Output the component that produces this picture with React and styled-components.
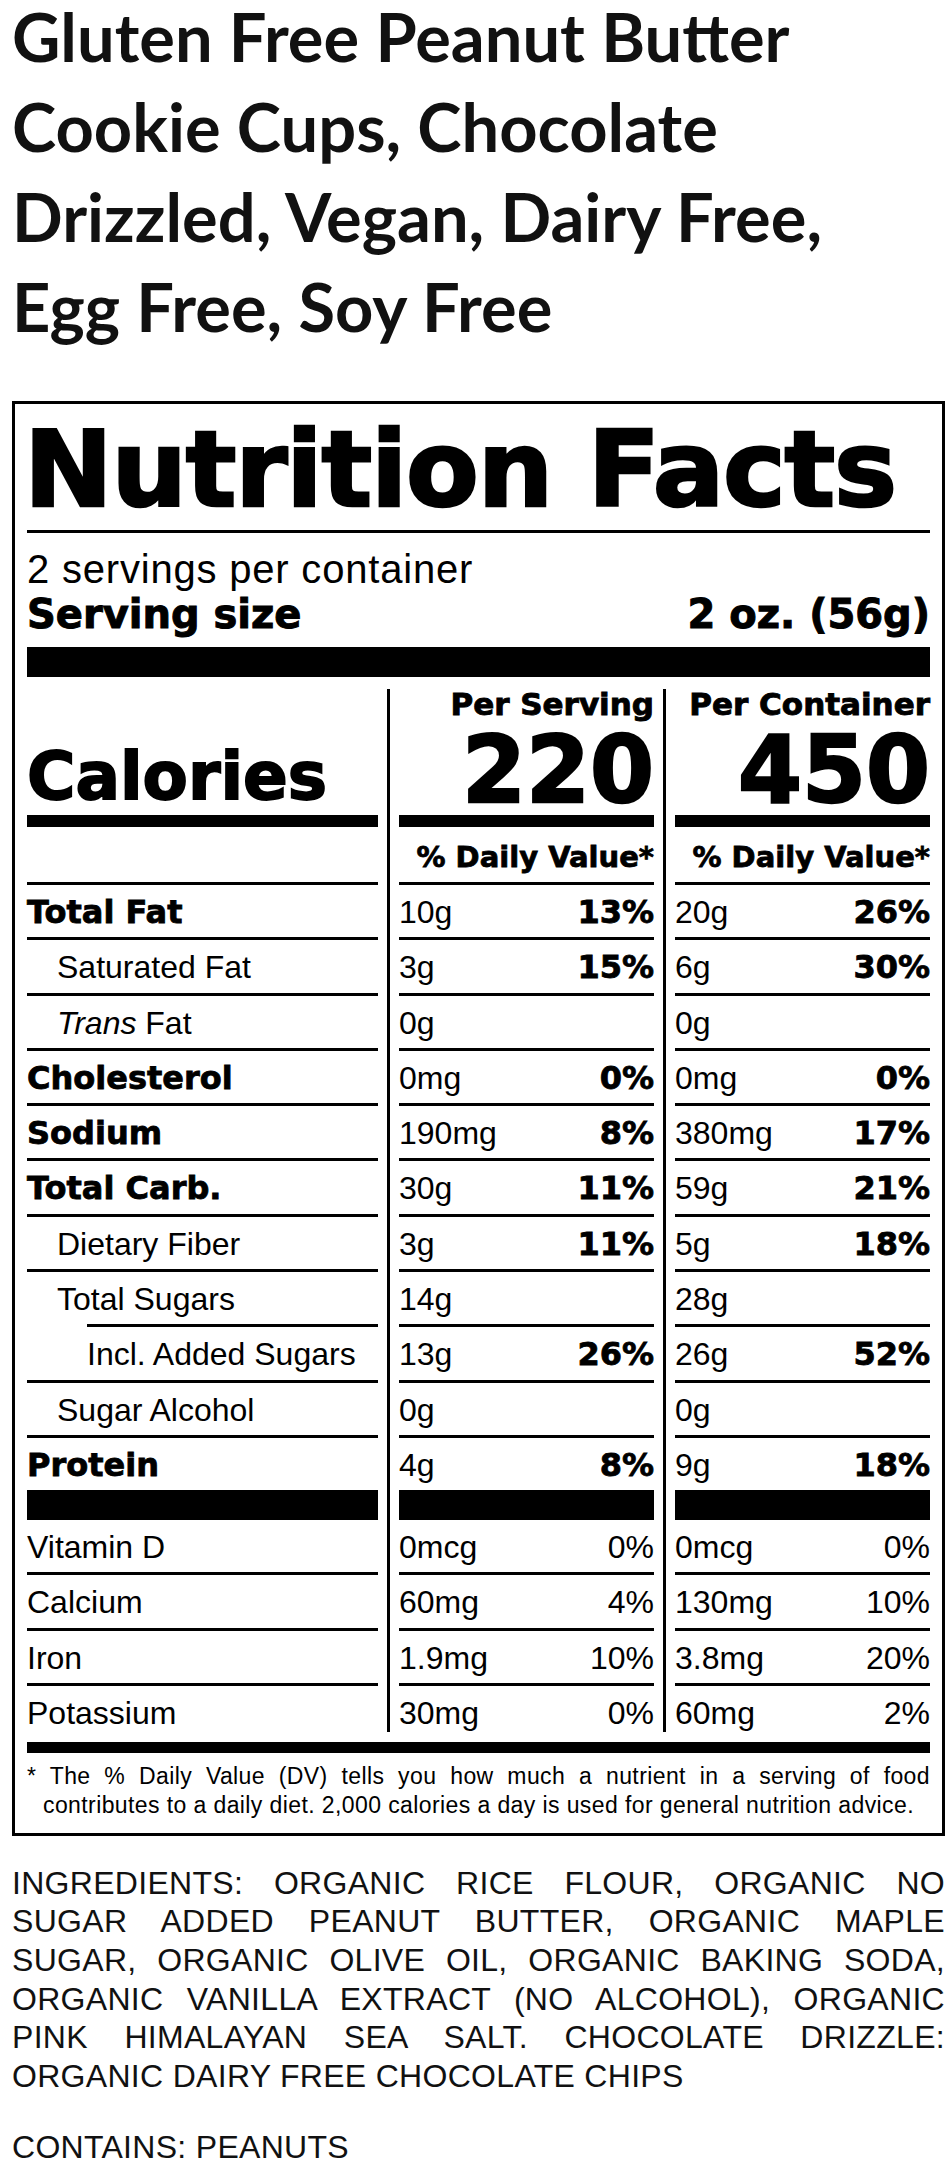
import styled, { createGlobalStyle } from "styled-components";

const GlobalStyle = createGlobalStyle`
  html, body {
    margin: 0;
    padding: 0;
    background: #fff;
    color: #000;
  }
  body {
    font-family: "Liberation Sans", Arial, sans-serif;
  }
`;

const HEAVY = `"DejaVu Sans", "Liberation Sans", sans-serif`;

const rows = [
  { label: "Total Fat", bold: true, a: ["10g", "13%"], b: ["20g", "26%"] },
  { label: "Saturated Fat", indent: 1, a: ["3g", "15%"], b: ["6g", "30%"] },
  { label: "Trans", trans: true, indent: 1, a: ["0g", ""], b: ["0g", ""] },
  { label: "Cholesterol", bold: true, a: ["0mg", "0%"], b: ["0mg", "0%"] },
  { label: "Sodium", bold: true, a: ["190mg", "8%"], b: ["380mg", "17%"] },
  { label: "Total Carb.", bold: true, a: ["30g", "11%"], b: ["59g", "21%"] },
  { label: "Dietary Fiber", indent: 1, a: ["3g", "11%"], b: ["5g", "18%"] },
  { label: "Total Sugars", indent: 1, a: ["14g", ""], b: ["28g", ""] },
  { label: "Incl. Added Sugars", indent: 2, a: ["13g", "26%"], b: ["26g", "52%"] },
  { label: "Sugar Alcohol", indent: 1, a: ["0g", ""], b: ["0g", ""] },
  { label: "Protein", bold: true, a: ["4g", "8%"], b: ["9g", "18%"] },
];

const vitamins = [
  { label: "Vitamin D", a: ["0mcg", "0%"], b: ["0mcg", "0%"] },
  { label: "Calcium", a: ["60mg", "4%"], b: ["130mg", "10%"] },
  { label: "Iron", a: ["1.9mg", "10%"], b: ["3.8mg", "20%"] },
  { label: "Potassium", a: ["30mg", "0%"], b: ["60mg", "2%"] },
];

const columns = [
  { key: "a", title: "Per Serving", calories: "220" },
  { key: "b", title: "Per Container", calories: "450" },
];

const App = () => {
  return (
    <>
      <GlobalStyle />
      <Page>
        <Title>
          Gluten Free Peanut Butter Cookie Cups, Chocolate Drizzled, Vegan,
          Dairy Free, Egg Free, Soy Free
        </Title>

        <Label>
          <Heading>Nutrition Facts</Heading>
          <ThinRule />
          <Servings>2 servings per container</Servings>
          <ServingSize>
            <span>Serving size</span>
            <span>2 oz. (56g)</span>
          </ServingSize>
          <ThickBar $h={30} />

          <Columns>
            <Column>
              <CaloriesCell>Calories</CaloriesCell>
              <Bar />
              <DVCell />
              {rows.map((r) => (
                <Cell
                  key={r.label}
                  $bold={r.bold}
                  $indent={r.indent === 1 ? 30 : 0}
                  $shift={r.indent === 2 ? 60 : 0}
                >
                  {r.trans ? (
                    <>
                      <em>Trans</em> Fat
                    </>
                  ) : (
                    r.label
                  )}
                </Cell>
              ))}
              <Bar $h={30} />
              {vitamins.map((v, i) => (
                <Cell key={v.label} $first={i === 0} $last={i === vitamins.length - 1}>
                  {v.label}
                </Cell>
              ))}
            </Column>

            {columns.map((c) => (
              <Column key={c.key} $divided>
                <PerLabel>{c.title}</PerLabel>
                <CalNumber>{c.calories}</CalNumber>
                <Bar />
                <DVCell>% Daily Value*</DVCell>
                {rows.map((r) => (
                  <ValueCell key={r.label}>
                    <span>{r[c.key][0]}</span>
                    <Percent $bold>{r[c.key][1]}</Percent>
                  </ValueCell>
                ))}
                <Bar $h={30} />
                {vitamins.map((v, i) => (
                  <ValueCell
                    key={v.label}
                    $first={i === 0}
                    $last={i === vitamins.length - 1}
                  >
                    <span>{v[c.key][0]}</span>
                    <Percent>{v[c.key][1]}</Percent>
                  </ValueCell>
                ))}
              </Column>
            ))}
          </Columns>

          <ThickBar $h={11} $mt={10} />
          <Footnote>
            * The % Daily Value (DV) tells you how much a nutrient in a serving
            of food contributes to a daily diet. 2,000 calories a day is used for
            general nutrition advice.
          </Footnote>
        </Label>

        <Ingredients>
          INGREDIENTS: ORGANIC RICE FLOUR, ORGANIC NO SUGAR ADDED PEANUT BUTTER,
          ORGANIC MAPLE SUGAR, ORGANIC OLIVE OIL, ORGANIC BAKING SODA, ORGANIC
          VANILLA EXTRACT (NO ALCOHOL), ORGANIC PINK HIMALAYAN SEA SALT.
          CHOCOLATE DRIZZLE: ORGANIC DAIRY FREE CHOCOLATE CHIPS
        </Ingredients>
        <Contains>CONTAINS: PEANUTS</Contains>
      </Page>
    </>
  );
};

export default App;

const Page = styled.main`
  width: 933px;
  padding-left: 12px;
`;

const Title = styled.h1`
  margin: -9px 0 50px;
  padding-right: 30px;
  font-family: "Lato", "Open Sans", sans-serif;
  font-weight: 700;
  font-size: 66.8px;
  line-height: 90px;
  color: #111;
`;

const Label = styled.section`
  box-sizing: border-box;
  width: 933px;
  border: 3px solid #000;
  padding: 0 12px 13px;
`;

const Heading = styled.h2`
  margin: 0 0 0 -3px;
  padding-top: 13px;
  font-family: ${HEAVY};
  font-weight: 700;
  font-size: 106px;
  line-height: 106px;
  letter-spacing: -1.2px;
  -webkit-text-stroke: 2.6px #000;
`;

const ThinRule = styled.div`
  margin-top: 7px;
  height: 3px;
  background: #000;
`;

const Servings = styled.div`
  margin-top: 14px;
  font-size: 40px;
  line-height: 45px;
  letter-spacing: 0.8px;
`;

const ServingSize = styled.div`
  display: flex;
  justify-content: space-between;
  font-family: ${HEAVY};
  font-weight: 700;
  font-size: 40px;
  line-height: 45px;
  -webkit-text-stroke: 1px #000;
`;

const ThickBar = styled.div`
  margin-top: ${({ $mt }) => ($mt ? $mt : 10)}px;
  height: ${({ $h }) => $h}px;
  background: #000;
`;

const Columns = styled.div`
  display: grid;
  grid-template-columns: 351px 255px 255px;
  column-gap: 21px;
  margin-top: 12px;
`;

const Column = styled.div`
  position: relative;
  display: flex;
  flex-direction: column;

  ${({ $divided }) =>
    $divided &&
    `
    &::before {
      content: "";
      position: absolute;
      left: -12px;
      top: 0;
      bottom: 0;
      width: 3px;
      background: #000;
    }
  `}
`;

const CaloriesCell = styled.div`
  box-sizing: border-box;
  height: 126px;
  display: flex;
  align-items: flex-end;
  padding-bottom: 5px;
  font-family: ${HEAVY};
  font-weight: 700;
  font-size: 66px;
  line-height: 66px;
  -webkit-text-stroke: 1.8px #000;
`;

const PerLabel = styled.div`
  height: 31px;
  text-align: right;
  font-family: ${HEAVY};
  font-weight: 700;
  font-size: 31px;
  line-height: 31px;
  -webkit-text-stroke: 0.9px #000;
  white-space: nowrap;
`;

const CalNumber = styled.div`
  padding-top: 7px;
  text-align: right;
  font-family: ${HEAVY};
  font-weight: 700;
  font-size: 92px;
  line-height: 88px;
  -webkit-text-stroke: 2.4px #000;
`;

const Bar = styled.div`
  height: ${({ $h }) => $h || 12}px;
  background: #000;
`;

const DVCell = styled.div`
  box-sizing: border-box;
  height: 55px;
  padding-top: 6px;
  text-align: right;
  font-family: ${HEAVY};
  font-weight: 700;
  font-size: 29px;
  line-height: 48px;
  white-space: nowrap;
  -webkit-text-stroke: 0.8px #000;
`;

const rowBox = ({ $first, $last }) => `
  box-sizing: border-box;
  height: ${$first ? 52 : $last ? 49 : 55.3}px;
  border-top: ${$first ? 0 : 3}px solid #000;
  padding-top: 3px;
  line-height: 48px;
  white-space: nowrap;
`;

const Cell = styled.div`
  ${rowBox}
  margin-left: ${({ $shift }) => $shift || 0}px;
  padding-left: ${({ $indent }) => $indent || 0}px;
  font-size: 32px;

  ${({ $bold }) =>
    $bold &&
    `
    font-family: ${HEAVY};
    font-weight: 700;
    -webkit-text-stroke: 0.8px #000;
  `}

  em {
    font-style: italic;
  }
`;

const ValueCell = styled.div`
  ${rowBox}
  display: flex;
  justify-content: space-between;
  font-size: 32px;
`;

const Percent = styled.span`
  ${({ $bold }) =>
    $bold &&
    `
    font-family: ${HEAVY};
    font-weight: 700;
    -webkit-text-stroke: 0.8px #000;
  `}
`;

const Footnote = styled.p`
  margin: 9px 0 0;
  font-size: 23px;
  line-height: 29px;
  letter-spacing: 0.4px;
  text-align: justify;
  text-align-last: center;
`;

const Ingredients = styled.p`
  margin: 28px 0 0;
  font-size: 32px;
  line-height: 38.6px;
  letter-spacing: 0.3px;
  text-align: justify;
  color: #111;
`;

const Contains = styled.p`
  margin: 33px 0 0;
  font-size: 32px;
  line-height: 38.6px;
  letter-spacing: 0.3px;
  color: #111;
`;
